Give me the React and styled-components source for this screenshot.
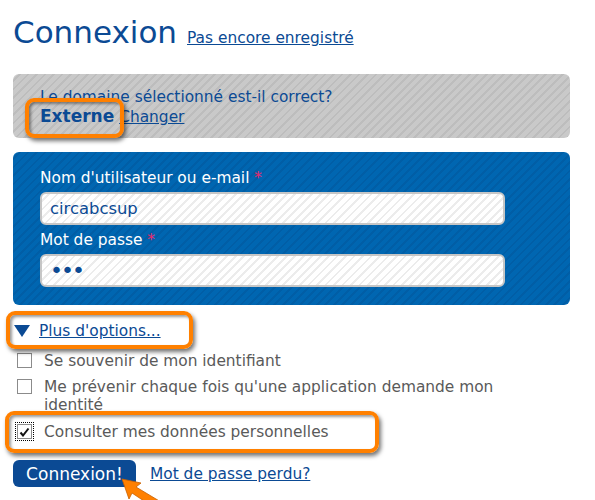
import React from 'react'
import styled, { createGlobalStyle } from 'styled-components'

const GlobalStyle = createGlobalStyle`
  html, body {
    margin: 0;
    padding: 0;
    background: #ffffff;
    font-family: "DejaVu Sans", Verdana, sans-serif;
  }
`

const Page = styled.div`
  width: 595px;
  height: 500px;
  padding: 12px 0 0 13px;
  box-sizing: border-box;
  position: relative;
  overflow: hidden;
  color: #0b4a94;
`

const TitleRow = styled.div`
  display: flex;
  align-items: baseline;
  gap: 10px;
  height: 48px;
`

const Title = styled.h1`
  margin: 0;
  font-size: 31px;
  font-weight: normal;
  color: #0b4a94;
  line-height: 40px;
`

const Link = styled.a`
  color: #0b4a94;
  text-decoration: underline;
  font-size: ${p => p.$size || 15.4}px;
  cursor: pointer;
`

const DomainBox = styled.div`
  margin-top: 14px;
  width: 557px;
  height: 64px;
  box-sizing: border-box;
  padding: 14px 27px 0;
  border-radius: 6px;
  background: repeating-linear-gradient(
    135deg,
    #c9c9c9 0px,
    #c9c9c9 4px,
    #bdbdbd 4px,
    #bdbdbd 6px
  );
  font-size: 15.4px;
  line-height: 19px;
`

const Mark = styled.span`
  position: relative;
  display: inline-block;
  align-self: flex-start;
  margin-top: ${p => p.$top || 0}px;
`

const Highlight = styled.span`
  position: absolute;
  top: ${p => p.$t}px;
  left: ${p => p.$l}px;
  right: ${p => p.$r}px;
  bottom: ${p => p.$b}px;
  border: 4px solid #ff8000;
  border-radius: 9px;
  box-shadow: 2px 3px 4px rgba(0, 0, 0, 0.55), inset 2px 2px 3px rgba(0, 0, 0, 0.4);
  pointer-events: none;
`

const Strong = styled.b`
  font-size: 17px;
  color: #0b4a94;
`

const LoginBox = styled.div`
  margin-top: 14px;
  width: 557px;
  box-sizing: border-box;
  padding: 16px 27px 18px;
  border-radius: 6px;
  background: repeating-linear-gradient(
    135deg,
    #0066b1 0px,
    #0066b1 4px,
    #015ea6 4px,
    #015ea6 6px
  );
  display: flex;
  flex-direction: column;
`

const Label = styled.label`
  color: #ffffff;
  font-size: 15.4px;
  line-height: 20px;
  margin-bottom: 4px;
  margin-top: ${p => p.$top || 0}px;
`

const Star = styled.span`
  color: #e8266a;
`

const Input = styled.input`
  width: 465px;
  height: 33px;
  box-sizing: border-box;
  border: 2px solid #c6c6c6;
  border-radius: 6px;
  padding: 0 8px;
  font-family: "DejaVu Sans", Verdana, sans-serif;
  font-size: ${p => (p.type === 'password' ? 22 : 16.4)}px;
  color: #0b4a94;
  outline: none;
  background: repeating-linear-gradient(
    135deg,
    #ffffff 0px,
    #ffffff 4px,
    #ececec 4px,
    #ececec 6px
  );
  letter-spacing: ${p => (p.type === 'password' ? '-2px' : 'normal')};
`

const Options = styled.div`
  margin-top: 17px;
  display: flex;
  align-items: center;
  height: 22px;
`

const Toggle = styled.span`
  display: flex;
  align-items: center;
  gap: 9px;
`

const Arrow = styled.span`
  width: 0;
  height: 0;
  margin-left: 1px;
  border-left: 8px solid transparent;
  border-right: 8px solid transparent;
  border-top: 12px solid #0b4a94;
`

const CheckList = styled.div`
  margin-top: 8px;
  display: flex;
  flex-direction: column;
  gap: 8px;
`

const CheckRow = styled.label`
  display: flex;
  align-items: flex-start;
  gap: 12px;
  padding-left: 4px;
  font-size: 15.4px;
  line-height: 18px;
  color: #5a5a5a;
  max-width: 480px;
`

const Box = styled.span`
  flex: none;
  width: 15px;
  height: 15px;
  margin-top: 1px;
  box-sizing: border-box;
  border: 1px solid #8b8b8b;
  background: #ffffff;
  display: flex;
  align-items: center;
  justify-content: center;
  outline: ${p => (p.$focus ? '1px dotted #000' : 'none')};
  outline-offset: 1px;
`

const Actions = styled.div`
  margin-top: 19px;
  display: flex;
  align-items: center;
  gap: 14px;
  position: relative;
`

const Button = styled.button`
  width: 123px;
  height: 27px;
  border: none;
  border-radius: 6px;
  background: #0b4a94;
  color: #ffffff;
  font-family: "DejaVu Sans", Verdana, sans-serif;
  font-size: 17px;
  padding: 0;
`

const Pointer = styled.svg`
  position: absolute;
  left: 108px;
  top: 18px;
`

const Check = () => (
  <svg width="11" height="10" viewBox="0 0 11 10">
    <path d="M1.5 5.5 L4 8.5 L9.5 1.5" fill="none" stroke="#111" strokeWidth="2" />
  </svg>
)

export default function App() {
  return (
    <>
      <GlobalStyle />
      <Page>
        <TitleRow>
          <Title>Connexion</Title>
          <Link>Pas encore enregistré</Link>
        </TitleRow>

        <DomainBox>
          <div>Le domaine sélectionné est-il correct?</div>
          <div>
            <Mark>
              <Strong>Externe</Strong>
              <Highlight $t={-9} $l={-15} $r={-10} $b={-11} />
            </Mark>{' '}
            <Link>Changer</Link>
          </div>
        </DomainBox>

        <LoginBox>
          <Label>
            Nom d'utilisateur ou e-mail <Star>*</Star>
          </Label>
          <Input defaultValue="circabcsup" readOnly />
          <Label $top={5}>
            Mot de passe <Star>*</Star>
          </Label>
          <Input type="password" defaultValue="abc" readOnly />
        </LoginBox>

        <Options>
          <Mark>
            <Toggle>
              <Arrow />
              <Link>Plus d'options...</Link>
            </Toggle>
            <Highlight $t={-11} $l={-7} $r={-32} $b={-9} />
          </Mark>
        </Options>

        <CheckList>
          <CheckRow>
            <Box />
            Se souvenir de mon identifiant
          </CheckRow>
          <CheckRow>
            <Box />
            Me prévenir chaque fois qu'une application demande mon identité
          </CheckRow>
          <Mark $top={1}>
            <CheckRow>
              <Box $focus>
                <Check />
              </Box>
              Consulter mes données personnelles
            </CheckRow>
            <Highlight $t={-12} $l={-8} $r={-50} $b={-12} />
          </Mark>
        </CheckList>

        <Actions>
          <Button>Connexion!</Button>
          <Link>Mot de passe perdu?</Link>
          <Pointer width="50" height="32" viewBox="0 0 50 32">
            <path
              d="M1 1 L20 5 L15 9 L40 24 L35 31 L11 15 L8 21 Z"
              fill="#ff8000"
              stroke="#c85f00"
              strokeWidth="0.8"
              strokeLinejoin="round"
            />
          </Pointer>
        </Actions>
      </Page>
    </>
  )
}
